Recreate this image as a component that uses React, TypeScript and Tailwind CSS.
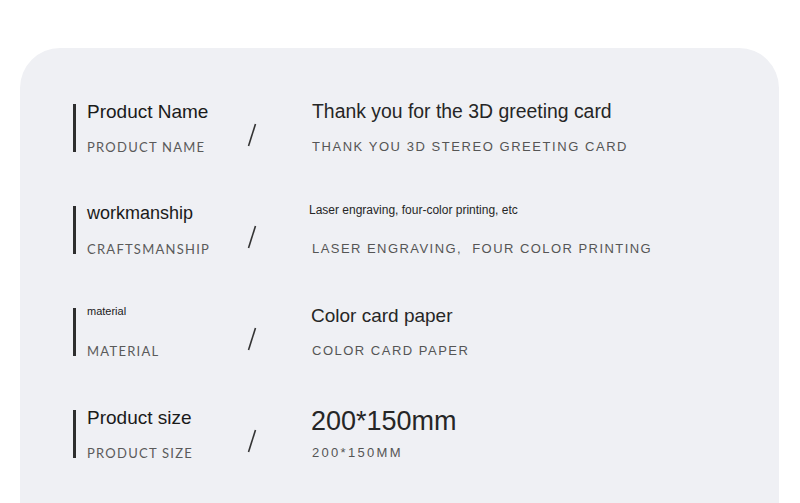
const rows = [
  {
    title: "Product Name",
    titleSize: "text-[19px]",
    sub: "PRODUCT NAME",
    value: "Thank you for the 3D greeting card",
    valueSize: "text-[19.4px]",
    valueShift: "",
    valueSub: "THANK YOU 3D STEREO GREETING CARD",
    subTrack: "tracking-[1.55px]",
  },
  {
    title: "workmanship",
    titleSize: "text-[18px]",
    sub: "CRAFTSMANSHIP",
    value: "Laser engraving, four-color printing, etc",
    valueSize: "text-[12px]",
    valueShift: "-ml-[3px]",
    valueSub: "LASER ENGRAVING,  FOUR COLOR PRINTING",
    subTrack: "tracking-[1.45px]",
  },
  {
    title: "material",
    titleSize: "text-[11px]",
    sub: "MATERIAL",
    value: "Color card paper",
    valueSize: "text-[19px]",
    valueShift: "-ml-[1px]",
    valueSub: "COLOR CARD PAPER",
    subTrack: "tracking-[1.5px]",
  },
  {
    title: "Product size",
    titleSize: "text-[19px]",
    sub: "PRODUCT SIZE",
    value: "200*150mm",
    valueSize: "text-[27px]",
    valueShift: "-ml-[1px]",
    valueSub: "200*150MM",
    subTrack: "tracking-[2.3px] text-[#444]",
  },
];

export default function App() {
  return (
    <div className="h-[503px] w-[800px] overflow-hidden bg-white pt-[48px] font-['Liberation_Sans',Arial,sans-serif]">
      <div className="ml-[20px] mr-[21px] h-[520px] rounded-[40px] bg-[#eff0f4] pt-[56px]">
        <div className="flex flex-col gap-[54px] pl-[53px]">
          {rows.map((row) => (
            <div key={row.sub} className="flex h-[48px] items-stretch">
              <div className="w-[3px] bg-[#2e2e2e]" />
              <div className="ml-[11px] flex w-[160px] flex-col justify-between">
                <span className={`${row.titleSize} -mt-[2px] leading-none text-[#1a1a1a]`}>
                  {row.title}
                </span>
                <span className="-mb-[2px] font-['Lato',sans-serif] text-[13px] leading-none tracking-[1.25px] text-[#5a5a5a]">
                  {row.sub}
                </span>
              </div>
              <div className="flex items-end pb-[5px]">
                <svg width="10" height="24" viewBox="0 0 10 24">
                  <line x1="8.5" y1="1" x2="1.5" y2="23" stroke="#333" strokeWidth="1.6" />
                </svg>
              </div>
              <div className="ml-[55px] flex flex-col justify-between">
                <span className={`${row.valueSize} ${row.valueShift} -mt-[2px] leading-none text-[#262626]`}>
                  {row.value}
                </span>
                <span className={`text-[#555] ${row.subTrack} -mb-[1px] whitespace-pre text-[13px] leading-none`}>
                  {row.valueSub}
                </span>
              </div>
            </div>
          ))}
        </div>
      </div>
    </div>
  );
}
